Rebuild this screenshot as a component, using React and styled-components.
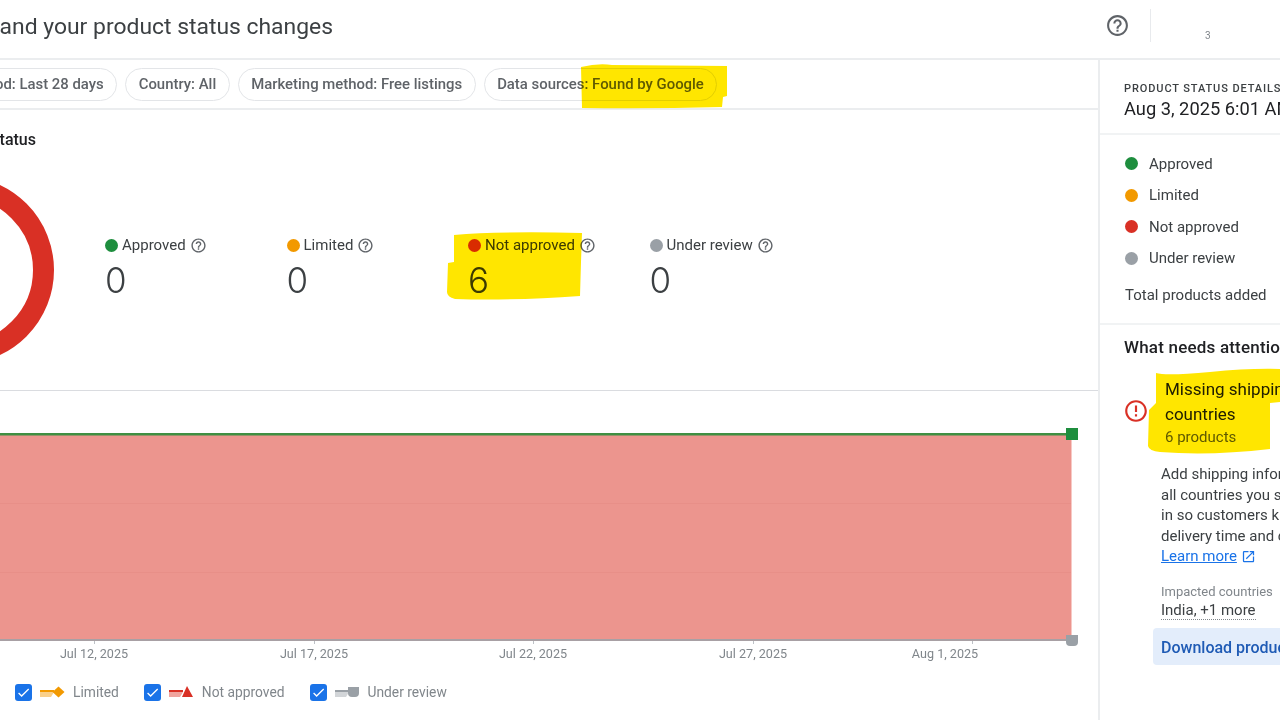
import styled, { createGlobalStyle } from "styled-components"
import { MdHelpOutline, MdErrorOutline, MdOpenInNew, MdCheck } from "react-icons/md"

const GlobalStyle = createGlobalStyle`
  html, body {
    margin: 0;
    padding: 0;
    background: #fff;
  }
  body {
    font-family: Roboto, "Liberation Sans", sans-serif;
    color: #3c4043;
  }
`

const Page = styled.div`
  position: relative;
  width: 1280px;
  height: 720px;
  overflow: hidden;
  background: #fff;
`

const Header = styled.header`
  display: flex;
  align-items: center;
  justify-content: space-between;
  height: 58px;
  border-bottom: 2px solid #ebedef;
`

const Title = styled.h1`
  margin: -6px 0 0 -80px;
  font-size: 22.9px;
  font-weight: 400;
  white-space: nowrap;
  color: #3c4043;
`

const HeaderTools = styled.div`
  display: flex;
  align-items: center;
  width: 175px;
  height: 33px;
  margin-top: -7px;
  color: #5f6368;
`

const HelpButton = styled.span`
  display: flex;
  width: 45px;
  font-size: 25px;
`

const ToolDivider = styled.span`
  width: 1px;
  height: 33px;
  background: #e8eaed;
`

const AccountStub = styled.span`
  margin: 20px 0 0 54px;
  font-size: 10px;
  color: #80868b;
`

const Body = styled.div`
  display: flex;
  height: 660px;
`

const Main = styled.main`
  flex: 0 0 1098px;
  width: 1098px;
  overflow: hidden;
`

const FilterBar = styled.div`
  display: flex;
  align-items: center;
  gap: 8px;
  height: 48px;
  border-bottom: 2px solid #ebedef;
`

const Chip = styled.span`
  flex: none;
  display: flex;
  align-items: center;
  height: 31px;
  padding: 0 12.5px;
  margin-left: ${(p) => p.$offset || 0}px;
  border: 1px solid #e3e5e8;
  border-radius: 17px;
  font-size: 14.9px;
  font-weight: 500;
  color: #5f6368;
  white-space: nowrap;
`

const StatusSection = styled.section`
  height: 281px;
  border-bottom: 1px solid #dadce0;
  box-sizing: border-box;
  padding-top: 20px;
`

const SectionTitle = styled.h2`
  margin: 0 0 0 -69px;
  font-size: 16px;
  font-weight: 500;
  line-height: 20px;
  color: #202124;
`

const StatusRow = styled.div`
  display: flex;
  align-items: flex-start;
  margin-top: 26px;
`

const Donut = styled.svg`
  flex: none;
  margin-left: -134px;
  display: block;
`

const Stats = styled.div`
  display: grid;
  grid-template-columns: repeat(4, 181.5px);
  margin: 59px 0 0 51px;
`

const Stat = styled.div`
  display: flex;
  flex-direction: column;
`

const StatLabel = styled.div`
  display: flex;
  align-items: center;
  gap: 4px;
  height: 20px;
  font-size: 15px;
  color: #3c4043;

  svg {
    color: #5f6368;
    font-size: 17px;
  }
`

const Dot = styled.span`
  flex: none;
  width: 13px;
  height: 13px;
  border-radius: 50%;
  background: ${(p) => p.$color};
`

const StatValue = styled.div`
  margin-top: 4px;
  font-family: Inter, Roboto, sans-serif;
  font-size: 35px;
  font-weight: 300;
  line-height: 42px;
  color: #3c4043;
`

const ChartSvg = styled.svg`
  display: block;
  font-family: Roboto, sans-serif;
`

const Legend = styled.div`
  display: flex;
  align-items: center;
  gap: 25px;
  height: 18px;
  margin-top: 13px;
  padding-left: 15px;
`

const LegendItem = styled.div`
  display: flex;
  align-items: center;
  gap: 8px;
  font-size: 13.8px;
  color: #80868b;
`

const CheckBox = styled.span`
  display: flex;
  align-items: center;
  justify-content: center;
  width: 17px;
  height: 17px;
  border-radius: 3px;
  background: #1a73e8;
  color: #fff;
  font-size: 15px;
`

const Side = styled.aside`
  flex: none;
  width: 420px;
  border-left: 2px solid #ebedef;
`

const SideHeader = styled.div`
  height: 51px;
  padding: 22px 0 0 24px;
  border-bottom: 2px solid #f1f3f4;
`

const Eyebrow = styled.div`
  font-size: 11px;
  font-weight: 500;
  line-height: 14px;
  letter-spacing: 0.9px;
  color: #3c4043;
`

const StampText = styled.div`
  margin-top: 1px;
  font-size: 18.3px;
  line-height: 24px;
  color: #202124;
  white-space: nowrap;
`

const Breakdown = styled.div`
  height: 175px;
  padding: 13px 0 0 25px;
  border-bottom: 2px solid #f1f3f4;
`

const BreakdownRow = styled.div`
  display: flex;
  align-items: center;
  gap: 11px;
  height: 31.5px;
  font-size: 15px;
  color: #3c4043;
`

const TotalRow = styled.div`
  margin-top: 11px;
  font-size: 15px;
  line-height: 20px;
  color: #3c4043;
`

const Attention = styled.div`
  padding: 11px 0 0 24px;
`

const AttentionTitle = styled.h3`
  margin: 0;
  font-size: 17px;
  font-weight: 500;
  line-height: 22px;
  letter-spacing: 0.2px;
  color: #202124;
  white-space: nowrap;
`

const Issue = styled.div`
  display: flex;
  align-items: flex-start;
  margin-top: 19px;
`

const IssueIcon = styled.span`
  display: flex;
  flex: none;
  width: 42px;
  margin: 21px 0 0 -1px;
  font-size: 26px;
  color: #d93025;
`

const IssueTitle = styled.div`
  font-size: 17px;
  line-height: 25px;
  color: #202124;
  white-space: nowrap;
`

const IssueCount = styled.div`
  font-size: 15px;
  line-height: 20px;
  color: #5f6368;
`

const IssueBody = styled.div`
  margin: 17px 0 0 37px;
  white-space: nowrap;
`

const Description = styled.p`
  margin: 0;
  font-size: 15px;
  line-height: 20.6px;
  color: #3c4043;
`

const LearnMore = styled.a`
  display: flex;
  align-items: center;
  gap: 4px;
  color: #1a73e8;
  font-size: 15px;
  line-height: 20.6px;

  span {
    text-decoration: underline;
  }

  svg {
    font-size: 15px;
  }
`

const CountriesLabel = styled.div`
  margin-top: 17px;
  font-size: 13px;
  line-height: 16px;
  color: #80868b;
`

const CountriesValue = styled.div`
  width: fit-content;
  margin-top: 2px;
  font-size: 15px;
  line-height: 17px;
  color: #3c4043;
  border-bottom: 1px dotted #80868b;
`

const DownloadButton = styled.div`
  margin: 8px 0 0 -8px;
  width: 300px;
  height: 37px;
  padding: 2px 0 0 8px;
  box-sizing: border-box;
  display: flex;
  align-items: center;
  border-radius: 4px;
  background: #e3edfb;
  font-size: 16px;
  font-weight: 500;
  color: #1f5bb5;
`

const Highlights = styled.svg`
  position: absolute;
  inset: 0;
  mix-blend-mode: multiply;
  pointer-events: none;
`

const stats = [
  { label: "Approved", value: 0, color: "#1e8e3e" },
  { label: "Limited", value: 0, color: "#f29900" },
  { label: "Not approved", value: 6, color: "#d93025" },
  { label: "Under review", value: 0, color: "#9aa0a6" },
]

const ticks = [
  { x: 94, label: "Jul 12, 2025" },
  { x: 314, label: "Jul 17, 2025" },
  { x: 533, label: "Jul 22, 2025" },
  { x: 753, label: "Jul 27, 2025" },
  { x: 945, tick: 972, label: "Aug 1, 2025" },
]

const legend = [
  { label: "Limited", line: "#f29900", soft: "#fad08a", shape: <path d="M18.5 0.5 L24.5 6 L18.5 11.5 L12.5 6 Z" fill="#f29900" /> },
  { label: "Not approved", line: "#d93025", soft: "#f0a49e", shape: <path d="M18 0 L24 11 L13 11 Z" fill="#d93025" /> },
  { label: "Under review", line: "#9aa0a6", soft: "#d2d5d8", shape: <path d="M13 1 H24 V7 Q24 11 20 11 H17 Q13 11 13 7 Z" fill="#9aa0a6" /> },
]

const LegendGlyph = ({ line, soft, shape }) => (
  <svg width="25" height="12" viewBox="0 0 25 12">
    <rect x="0" y="4" width="14" height="2" fill={line} />
    <path d="M0 6 H14 L11 11 H0 Z" fill={soft} />
    {shape}
  </svg>
)

const App = () => {
  return (
    <>
      <GlobalStyle />
      <Page>
        <Header>
          <Title>Understand your product status changes</Title>
          <HeaderTools>
            <HelpButton><MdHelpOutline /></HelpButton>
            <ToolDivider />
            <AccountStub>3</AccountStub>
          </HeaderTools>
        </Header>
        <Body>
          <Main>
            <FilterBar>
              <Chip $offset={-45}>Period: Last 28 days</Chip>
              <Chip>Country: All</Chip>
              <Chip>Marketing method: Free listings</Chip>
              <Chip>Data sources: Found by Google</Chip>
            </FilterBar>
            <StatusSection>
              <SectionTitle>Product status</SectionTitle>
              <StatusRow>
                <Donut width="188" height="188" viewBox="0 0 188 188">
                  <circle cx="94" cy="94" r="83.5" fill="none" stroke="#d93025" strokeWidth="21" />
                </Donut>
                <Stats>
                  {stats.map((s) => (
                    <Stat key={s.label}>
                      <StatLabel>
                        <Dot $color={s.color} />
                        {s.label}
                        <MdHelpOutline />
                      </StatLabel>
                      <StatValue>{s.value}</StatValue>
                    </Stat>
                  ))}
                </Stats>
              </StatusRow>
            </StatusSection>
            <ChartSvg width="1098" height="279" viewBox="0 391 1098 279">
              <rect x="0" y="434" width="1071" height="206" fill="#ec958e" />
              <rect x="1071" y="434" width="1" height="206" fill="#f7c9c5" />
              <rect x="0" y="503" width="1071" height="1" fill="#e88f88" />
              <rect x="0" y="572" width="1071" height="1" fill="#e88f88" />
              <rect x="0" y="639" width="1071" height="2" fill="#a8a0a4" />
              <rect x="0" y="433" width="1071" height="2.5" fill="#3f8f42" />
              <rect x="1066" y="428" width="12" height="12" fill="#1e8e3e" />
              <path d="M1066 635 H1078 V642 Q1078 646 1074 646 H1070 Q1066 646 1066 642 Z" fill="#9aa0a6" />
              {ticks.map((t) => (
                <g key={t.label}>
                  <rect x={t.tick || t.x} y="641" width="1" height="3" fill="#bdc1c6" />
                  <text x={t.x} y="658" fontSize="12.6" fill="#80868b" textAnchor="middle">{t.label}</text>
                </g>
              ))}
            </ChartSvg>
            <Legend>
              {legend.map((l) => (
                <LegendItem key={l.label}>
                  <CheckBox><MdCheck /></CheckBox>
                  <LegendGlyph {...l} />
                  {l.label}
                </LegendItem>
              ))}
            </Legend>
          </Main>
          <Side>
            <SideHeader>
              <Eyebrow>PRODUCT STATUS DETAILS</Eyebrow>
              <StampText>Aug 3, 2025 6:01 AM</StampText>
            </SideHeader>
            <Breakdown>
              {stats.map((s) => (
                <BreakdownRow key={s.label}>
                  <Dot $color={s.color} />
                  {s.label}
                </BreakdownRow>
              ))}
              <TotalRow>Total products added</TotalRow>
            </Breakdown>
            <Attention>
              <AttentionTitle>What needs attention</AttentionTitle>
              <Issue>
                <IssueIcon><MdErrorOutline /></IssueIcon>
                <div>
                  <IssueTitle>Missing shipping costs for some<br />countries</IssueTitle>
                  <IssueCount>6 products</IssueCount>
                </div>
              </Issue>
              <IssueBody>
                <Description>
                  Add shipping information for<br />
                  all countries you sell products<br />
                  in so customers know the<br />
                  delivery time and cost
                </Description>
                <LearnMore><span>Learn more</span><MdOpenInNew /></LearnMore>
                <CountriesLabel>Impacted countries</CountriesLabel>
                <CountriesValue>India, +1 more</CountriesValue>
                <DownloadButton>Download product list</DownloadButton>
              </IssueBody>
            </Attention>
          </Side>
        </Body>
        <Highlights width="1280" height="720" viewBox="0 0 1280 720">
          <g fill="#ffe600">
            <path d="M581 67 Q598 63 612 65 L727 66 L727 96 L723 97 L722 107 Q650 109 582 108 Z" />
            <path d="M454 235 Q500 231 582 233 L581 262 L580 296 Q510 301 455 299 Q447 297 447 292 L448 263 L454 262 Z" />
            <path d="M1156 373 Q1166 376 1210 372 Q1250 368 1280 369 L1280 402 L1270 403 L1270 449 Q1210 456 1160 452 Q1149 451 1148 446 L1149 410 L1156 403 Z" />
          </g>
        </Highlights>
      </Page>
    </>
  )
}

export default App
